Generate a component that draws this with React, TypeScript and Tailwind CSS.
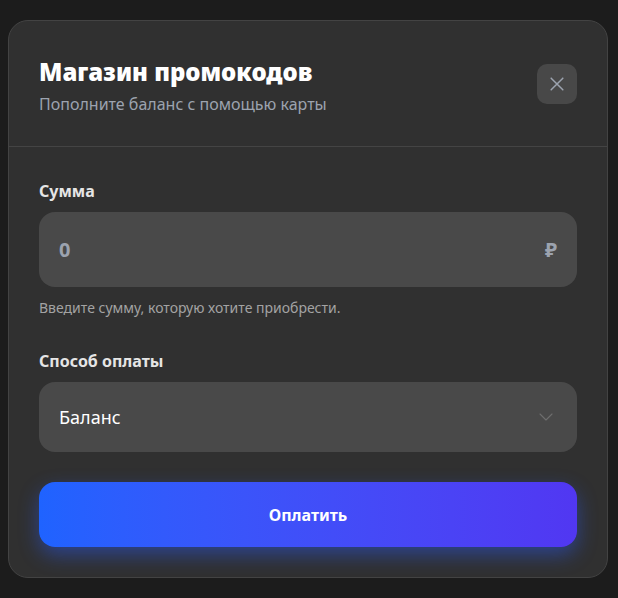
import React from "react";

export default function App() {
  return (
    <div className="min-h-[598px] w-full bg-[#1c1c1c] pt-[20px] px-[8px]" style={{ fontFamily: '"Noto Sans", "Open Sans", sans-serif' }}>
      <div className="w-[600px] h-[558px] rounded-[20px] border border-[#434343] bg-[#303030] flex flex-col">
        <div className="flex items-start justify-between px-[30px] pt-[35px] pb-[30px] border-b border-[#444444]">
          <div className="flex flex-col">
            <h1 className="text-[24px] leading-[32px] font-black text-white">Магазин промокодов</h1>
            <p className="mt-[4px] text-[16px] leading-[24px] text-[#9ca3af]">Пополните баланс с помощью карты</p>
          </div>
          <button className="mt-[8px] w-[40px] h-[40px] rounded-[10px] bg-[#484848] flex items-center justify-center">
            <svg width="20" height="20" viewBox="0 0 24 24" fill="none" stroke="#9ca3af" strokeWidth="1.8" strokeLinecap="round">
              <path d="M5 5L19 19M19 5L5 19" />
            </svg>
          </button>
        </div>
        <div className="flex flex-col px-[30px] pt-[32px]">
          <label className="text-[16px] leading-[24px] font-bold text-[#e5e5e5]">Сумма</label>
          <div className="mt-[9px] h-[75px] rounded-[16px] bg-[#494949] flex items-center justify-between px-[20px]">
            <span className="text-[20px] font-bold text-[#9ca3af]">0</span>
            <span className="text-[20px] font-bold text-[#9ca3af]">₽</span>
          </div>
          <p className="mt-[11px] text-[14px] leading-[20px] text-[#a3a3a3]">Введите сумму, которую хотите приобрести.</p>
          <label className="mt-[31px] text-[16px] leading-[24px] font-bold text-[#e5e5e5]">Способ оплаты</label>
          <div className="mt-[9px] h-[70px] rounded-[16px] bg-[#494949] flex items-center justify-between pl-[20px] pr-[22px]">
            <span className="text-[18px] text-white">Баланс</span>
            <svg width="18" height="18" viewBox="0 0 24 24" fill="none" stroke="#6e6e6e" strokeWidth="1.5" strokeLinecap="round" strokeLinejoin="round">
              <path d="M4 8l8 8 8-8" />
            </svg>
          </div>
          <button className="mt-[30px] h-[65px] rounded-[16px] bg-gradient-to-r from-[#1f63ff] to-[#5137f2] text-white text-[16px] font-bold shadow-[0_8px_20px_rgba(40,90,255,0.45)]">
            Оплатить
          </button>
        </div>
      </div>
    </div>
  );
}
